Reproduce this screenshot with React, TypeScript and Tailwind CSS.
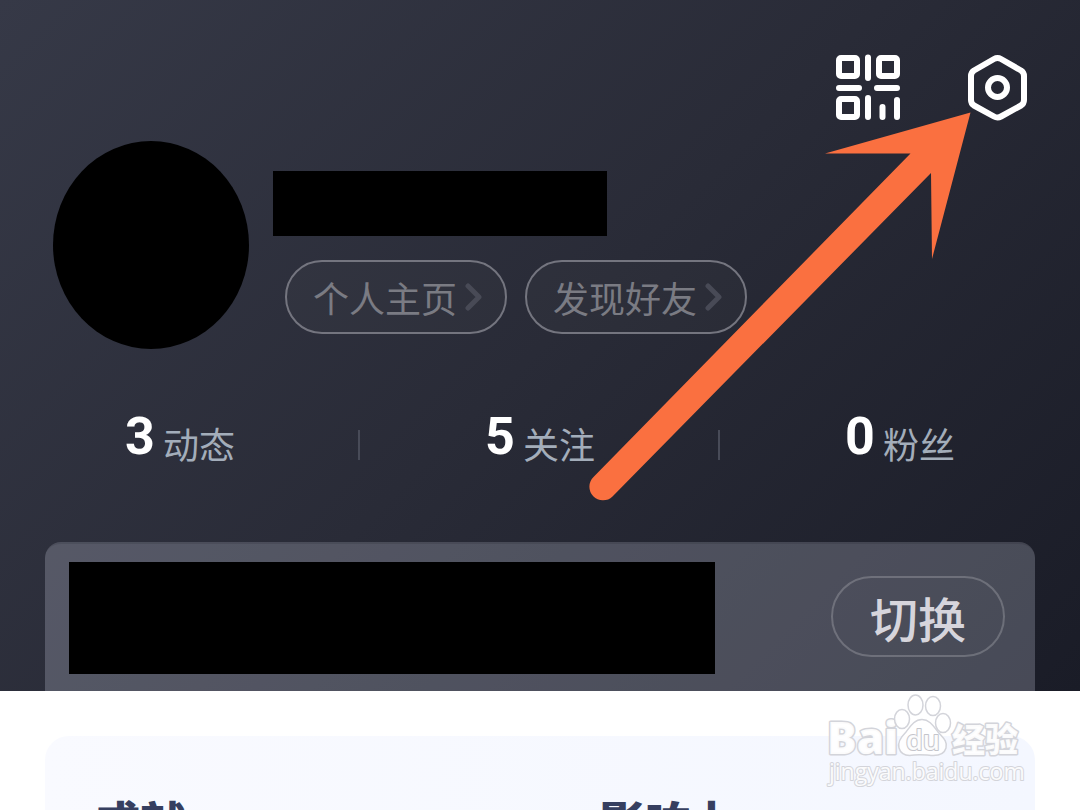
const stats = [
    { value: 3, label: '动态' },
    { value: 5, label: '关注' },
    { value: 0, label: '粉丝' },
];

function QrIcon() {
    return (
        <svg width="66" height="68" viewBox="0 0 66 68" fill="none" stroke="white" strokeWidth="6" strokeLinecap="round">
            <rect x="4" y="5" width="18" height="18" rx="2" />
            <rect x="44" y="5" width="18" height="18" rx="2" />
            <rect x="4" y="46" width="18" height="18" rx="2" />
            <path d="M33 4.500V25M4 35H24M42 35H62M33 45V64M47.500 54V64M62 47V64" />
        </svg>
    );
}

function SettingsIcon() {
    return (
        <svg width="62" height="68" viewBox="0 0 62 68" fill="none" stroke="white" strokeWidth="6" strokeLinejoin="round">
            <path d="M28 6Q31.500 4 35 6L55 17.500Q58 19.500 58 23V47Q58 50.500 55 52.500L35 63.500Q31.500 65.500 28 63.500L8 52.500Q5 50.500 5 47V23Q5 19.500 8 17.500Z" />
            <circle cx="31.500" cy="34.500" r="9.500" />
        </svg>
    );
}

function Chevron() {
    return (
        <svg width="18" height="28" viewBox="0 0 18 28" fill="none" stroke="#484a56" strokeWidth="5" strokeLinecap="round" strokeLinejoin="round">
            <path d="M3 3L14 14L3 25" />
        </svg>
    );
}

function PillButton({ label }: { label: string }) {
    return (
        <button className="flex h-[74px] w-[222px] items-center gap-2 rounded-full border-2 border-[#74757f] bg-white/2 pl-[26px] text-[36px] text-[#7a7b83]">
            {label}
            <Chevron />
        </button>
    );
}

function Arrow() {
    return (
        <svg className="pointer-events-none absolute top-[110px] left-[580px]" width="400" height="400" viewBox="580 110 400 400" fill="#fa7040">
            <path d="M970.500 112.500L825 153.500L910.500 153.500L593.500 477A13.500 13.500 0 0 0 612.500 496.500L931 173L932 259Z" />
        </svg>
    );
}

function Watermark() {
    return (
        <div className="absolute top-[694px] left-[826px] text-white/90">
            <svg width="200" height="96" viewBox="0 0 200 96" fill="currentColor" stroke="#d3d4da" strokeWidth="1.500">
                <g strokeWidth="3" paintOrder="stroke" strokeLinejoin="round">
                    <text x="1" y="60" fontSize="44" fontWeight="800" fontFamily="Open Sans, sans-serif">Bai</text>
                    <text x="126" y="58" fontSize="33" fontWeight="900" fontFamily="Noto Sans CJK SC, sans-serif">经验</text>
                </g>
                <ellipse cx="76" cy="25" rx="7.500" ry="9.500" />
                <ellipse cx="89.500" cy="11" rx="7.500" ry="10" />
                <ellipse cx="107" cy="12" rx="7.500" ry="9.500" />
                <ellipse cx="117" cy="29" rx="7.500" ry="9.500" />
                <path d="M96 25.500C88 25.500 84 33 80 38C75 43 71 48 73 54C75 61 82 62 88 61C94 60 99 61 105 61.500C112 62 118 61 120 54C122 47 116 43 112 38C108 33 104 25.500 96 25.500Z" />
                <g strokeWidth="2" paintOrder="stroke" strokeLinejoin="round">
                    <text x="80" y="56" fontSize="27" fontWeight="600" fontFamily="Open Sans, sans-serif" stroke="#c4c5cb">du</text>
                    <text x="3" y="86" fontSize="23" fontFamily="Open Sans, sans-serif">jingyan.baidu.com</text>
                </g>
            </svg>
        </div>
    );
}

export default function App() {
    return (
        <div className="relative h-screen overflow-hidden bg-white font-['Noto_Sans_CJK_SC',sans-serif]">
            <header className="bg-linear-135 from-[#363947] via-[#292b37] to-[#1a1c27]">
                {/* Toolbar */}
                <div className="flex justify-end gap-[65px] pt-[53px] pr-[52px]">
                    <button aria-label="二维码"><QrIcon /></button>
                    <button aria-label="设置"><SettingsIcon /></button>
                </div>

                {/* Profile */}
                <section className="flex items-start gap-6 pt-5 pl-[53px]">
                    <div className="h-[208px] w-[196px] shrink-0 rounded-[50%] bg-black" />
                    <div className="pt-[30px]">
                        <div className="h-[65px] w-[334px] bg-black" />
                        <div className="flex gap-[18px] pt-6 pl-3">
                            <PillButton label="个人主页" />
                            <PillButton label="发现好友" />
                        </div>
                    </div>
                </section>

                {/* Stats */}
                <section className="mt-[60px] grid grid-cols-3">
                    {stats.map((stat, i) => (
                        <div key={stat.label} className="relative flex h-[68px] items-start justify-center gap-2">
                            <span className="font-['Roboto',sans-serif] text-[52px] leading-[56px] font-bold text-white">{stat.value}</span>
                            <span className="text-[36px] leading-[68px] text-[#a3adba]">{stat.label}</span>
                            {i < 2 && <span className="absolute top-[21px] right-0 h-[30px] w-0.5 bg-[#484b58]" />}
                        </div>
                    ))}
                </section>

                {/* Account card */}
                <section className="mx-[45px] mt-[65px] flex h-[149px] items-start justify-between rounded-t-2xl border-t-2 border-black/10 bg-[#e8ecff]/22 pt-[18px] pr-[30px] pl-6">
                    <div className="h-[112px] w-[646px] bg-black" />
                    <button className="mt-3.5 h-[81px] w-[174px] rounded-full border-2 border-white/20 text-5xl font-medium text-[#d6d5dc]">切换</button>
                </section>
            </header>

            <main className="mx-[45px] mt-[45px] grid h-[200px] grid-cols-2 rounded-3xl bg-linear-to-r from-[#f9faff] to-[#f4f7ff] pt-[54px] text-[46px] leading-[60px] font-black text-[#363f60]">
                <h2 className="pl-[49px]">成就</h2>
                <h2 className="pl-[59px]">影响力</h2>
            </main>

            <Arrow />
            <Watermark />
        </div>
    );
}
